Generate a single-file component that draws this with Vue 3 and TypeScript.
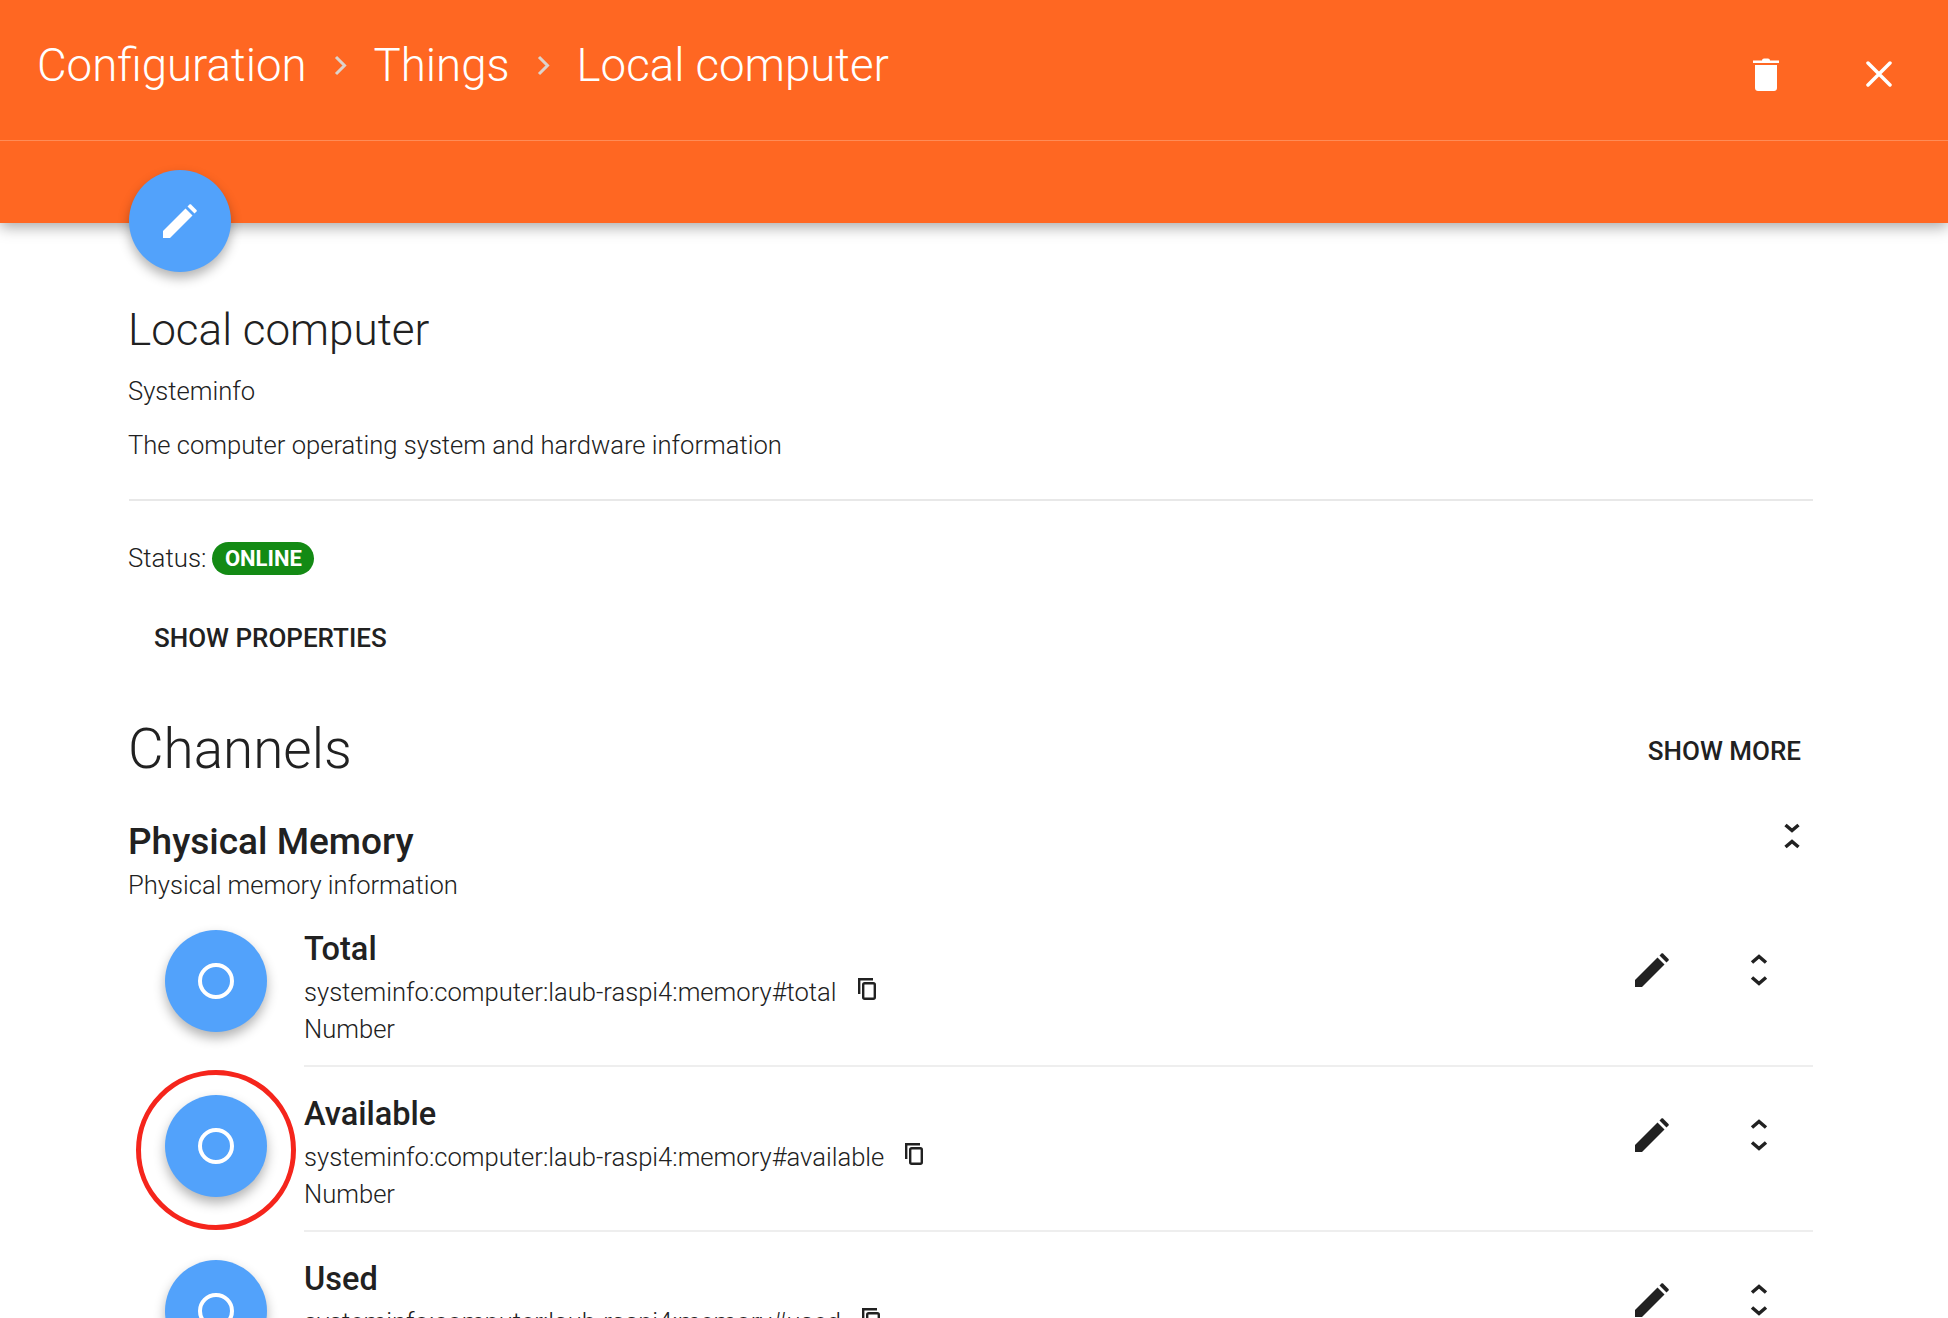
<script setup lang="ts">
interface Channel {
  label: string;
  uid: string;
  type: string;
}

const channels: Channel[] = [
  { label: 'Total', uid: 'systeminfo:computer:laub-raspi4:memory#total', type: 'Number' },
  { label: 'Available', uid: 'systeminfo:computer:laub-raspi4:memory#available', type: 'Number' },
  { label: 'Used', uid: 'systeminfo:computer:laub-raspi4:memory#used', type: 'Number' },
];
</script>

<template>
  <div class="page">
    <header class="header">
      <div class="navbar">
        <nav class="crumbs">
          <span>Configuration</span>
          <svg class="sep" viewBox="0 0 13 21"><path d="M2 2l8.500 8.500L2 19" /></svg>
          <span>Things</span>
          <svg class="sep" viewBox="0 0 13 21"><path d="M2 2l8.500 8.500L2 19" /></svg>
          <span>Local computer</span>
        </nav>
        <div class="nav-actions">
          <svg class="trash" viewBox="0 0 26 33">
            <path d="M9 2.500C9 1.200 10 .5 11 .5h4c1 0 2 .7 2 2H26V5H0V2.500Z" />
            <path d="M2 7h22v23c0 1.700-1.300 3-3 3H5c-1.700 0-3-1.300-3-3Z" />
          </svg>
          <svg class="close" viewBox="0 0 26 26"><path d="M2 2l22 22M24 2L2 24" /></svg>
        </div>
      </div>
      <div class="subbar"></div>
    </header>

    <main class="content">
      <div class="fab-wrap">
        <button class="fab">
          <svg class="pencil white" viewBox="0 0 34 34">
            <path d="M0 34v-7L22.500 4.500l7 7L7 34Z" />
            <path d="M24.500 2.500 26.500.5c.5-.5 1-.5 1.500 0l5.500 5.500c.5.5.5 1 0 1.500l-2 2Z" />
          </svg>
        </button>
      </div>

      <h2 class="thing-name">Local computer</h2>
      <p class="binding">Systeminfo</p>
      <p class="desc">The computer operating system and hardware information</p>
      <hr class="rule" />

      <div class="status">
        <span>Status:</span>
        <span class="badge">ONLINE</span>
      </div>
      <div class="show-props">SHOW PROPERTIES</div>

      <div class="channels-head">
        <h1>Channels</h1>
        <span class="show-more">SHOW MORE</span>
      </div>

      <div class="group-head">
        <div class="group-text">
          <h3>Physical Memory</h3>
          <p>Physical memory information</p>
        </div>
        <svg class="chev collapse" viewBox="0 0 16 26"><path d="M1.500 2l6.500 5.500L14.500 2M1.500 24L8 18.500 14.500 24" /></svg>
      </div>

      <ul class="list">
        <li v-for="ch in channels" :key="ch.label" class="row">
          <div class="avatar-col">
            <div class="avatar" :class="{ marked: ch.label === 'Available' }">
              <span class="dot"></span>
            </div>
          </div>
          <div class="row-body">
            <div class="row-text">
              <div class="row-title">{{ ch.label }}</div>
              <div class="row-uid">
                <span>{{ ch.uid }}</span>
                <svg class="copy" viewBox="0 0 18 22">
                  <path d="M1.200 16V1.200H15" />
                  <rect x="5.200" y="5.200" width="11.600" height="15.600" rx="1.500" />
                </svg>
              </div>
              <div class="row-type">{{ ch.type }}</div>
            </div>
            <div class="row-actions">
              <svg class="pencil" viewBox="0 0 34 34">
                <path d="M0 34v-7L22.500 4.500l7 7L7 34Z" />
                <path d="M24.500 2.500 26.500.5c.5-.5 1-.5 1.500 0l5.500 5.500c.5.5.5 1 0 1.500l-2 2Z" />
              </svg>
              <svg class="chev expand" viewBox="0 0 18 32"><path d="M2 8.500l7-6 7 6M2 23.500l7 6 7-6" /></svg>
            </div>
          </div>
        </li>
      </ul>
    </main>
  </div>
</template>

<style>
html,
body {
  margin: 0;
  background: #fff;
  overflow: hidden;
}
</style>

<style scoped>
.page {
  height: 1318px;
  overflow: hidden;
  font-family: Roboto, sans-serif;
  color: #212121;
  background: #fff;
}

.header {
  background: #ff6722;
  box-shadow: 0 4px 14px rgba(0, 0, 0, 0.35);
  position: relative;
}

.navbar {
  height: 141px;
  box-sizing: border-box;
  border-bottom: 1px solid #ff8c57;
  padding: 0 0 0 37px;
  display: flex;
  justify-content: space-between;
}

.crumbs {
  display: flex;
  align-items: center;
  height: 131px;
  gap: 27px;
  font-size: 45.600px;
  font-weight: 300;
  color: #fff;
}

.sep {
  width: 13px;
  height: 21px;
  fill: none;
  stroke: #dcd3cc;
  stroke-width: 3;
}

.nav-actions {
  display: flex;
  align-items: center;
  height: 148px;
  gap: 87px;
  padding-right: 56px;
}

.trash {
  width: 26px;
  height: 33px;
  fill: #fff;
}

.close {
  width: 26px;
  height: 26px;
  fill: none;
  stroke: #fff;
  stroke-width: 3.500;
  stroke-linecap: round;
}

.subbar {
  height: 82px;
}

.content {
  padding: 0 135px 0 129px;
  position: relative;
}

.fab-wrap {
  height: 50px;
  position: relative;
  z-index: 2;
}

.fab {
  display: flex;
  align-items: center;
  justify-content: center;
  width: 102px;
  height: 102px;
  margin-top: -53px;
  border: 0;
  padding: 0;
  border-radius: 50%;
  background: #52a2fb;
  box-shadow: 0 6px 12px rgba(0, 0, 0, 0.3);
}

.pencil {
  width: 34px;
  height: 34px;
  fill: #212121;
}

.pencil.white {
  fill: #fff;
}

.thing-name,
.binding,
.desc,
.status,
.channels-head h1,
.group-text {
  margin-left: -1px;
}

.thing-name {
  margin-top: 0;
  margin-bottom: 0;
  padding-top: 82px;
  font-size: 44px;
  line-height: 56px;
  font-weight: 300;
}

.binding,
.desc {
  margin-right: 0;
  margin-bottom: 0;
  font-size: 25.600px;
  font-weight: 300;
  line-height: 36px;
}

.binding {
  margin-top: 15px;
}

.desc {
  margin-top: 18px;
}

.rule {
  margin: 36px 0 0;
  border: 0;
  border-top: 2px solid #e8e8e8;
}

.status {
  display: flex;
  align-items: center;
  gap: 6px;
  margin-top: 40px;
  font-size: 25.800px;
  font-weight: 300;
  height: 34px;
}

.badge {
  background: #138a14;
  color: #fff;
  font-size: 22px;
  font-weight: 700;
  height: 33px;
  line-height: 33px;
  padding: 0 12.500px;
  border-radius: 17px;
}

.show-props {
  margin-top: 45px;
  padding-left: 25px;
  font-size: 26px;
  font-weight: 500;
  line-height: 36px;
}

.channels-head {
  display: flex;
  align-items: center;
  justify-content: space-between;
  margin-top: 56.500px;
  padding-right: 12px;
}

.channels-head h1 {
  margin-top: 0;
  margin-bottom: 0;
  font-size: 54.800px;
  line-height: 72px;
  font-weight: 300;
}

.show-more {
  margin-top: 4px;
  font-size: 26px;
  font-weight: 500;
}

.group-head {
  display: flex;
  justify-content: space-between;
  margin-top: 34px;
  padding-right: 13px;
}

.group-head h3 {
  margin: 0;
  font-size: 37px;
  line-height: 46px;
  font-weight: 500;
}

.group-head p {
  margin: 2px 0 0;
  font-size: 25.600px;
  line-height: 36px;
  font-weight: 300;
}

.chev {
  fill: none;
  stroke: #212121;
  stroke-width: 3.500;
}

.collapse {
  width: 16px;
  height: 26px;
  margin-top: 4px;
}

.expand {
  width: 18px;
  height: 32px;
  margin-left: 81px;
}

.list {
  list-style: none;
  margin: -1px 0 0;
  padding: 0;
}

.row {
  display: flex;
  height: 165px;
}

.avatar-col {
  width: 175px;
  flex: none;
  display: flex;
  justify-content: center;
  padding-top: 28px;
  padding-right: 2px;
  box-sizing: border-box;
}

.avatar {
  width: 102px;
  height: 102px;
  border-radius: 50%;
  background: #52a2fb;
  box-shadow: 0 6px 12px rgba(0, 0, 0, 0.3);
  display: flex;
  align-items: center;
  justify-content: center;
  position: relative;
}

.avatar.marked::after {
  content: '';
  position: absolute;
  left: -29px;
  top: -25px;
  width: 150px;
  height: 150px;
  border: 5px solid #f5251c;
  border-radius: 50%;
}

.dot {
  width: 28px;
  height: 28px;
  border: 4px solid #fff;
  border-radius: 50%;
}

.row-body {
  flex: 1;
  display: flex;
  justify-content: space-between;
  border-bottom: 2px solid #eee;
  box-sizing: border-box;
  padding-top: 25px;
}

.row-title {
  font-size: 32.500px;
  line-height: 44px;
  font-weight: 500;
}

.row-uid {
  display: flex;
  align-items: flex-start;
  gap: 21px;
  margin-top: 3px;
  font-size: 25.600px;
  font-weight: 300;
  line-height: 36px;
}

.copy {
  width: 18px;
  height: 22px;
  margin-top: 4px;
  fill: none;
  stroke: #212121;
  stroke-width: 2.400;
}

.row-type {
  margin-top: 1px;
  font-size: 25.600px;
  font-weight: 300;
  line-height: 36px;
}

.row-actions {
  display: flex;
  align-items: center;
  height: 87px;
  padding-right: 45px;
}
</style>
